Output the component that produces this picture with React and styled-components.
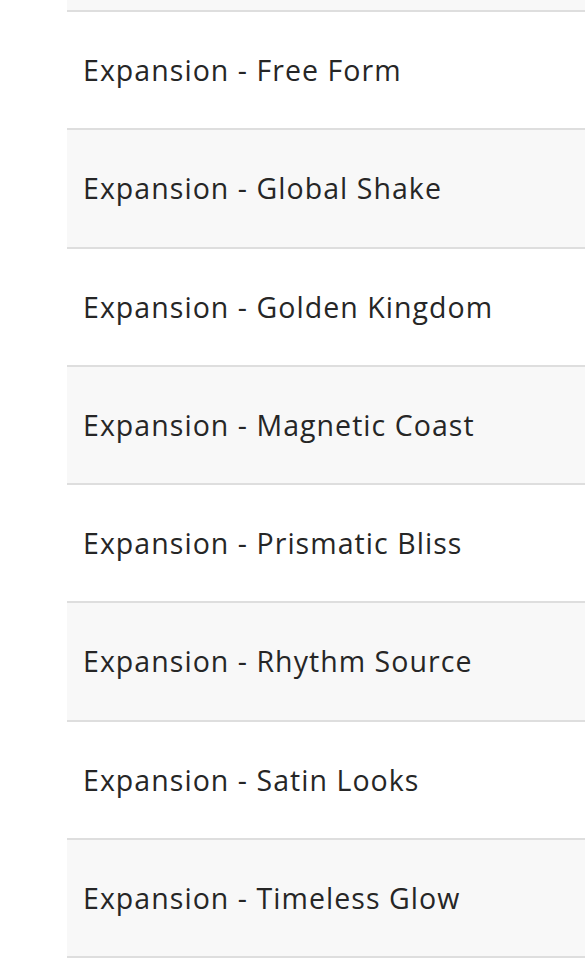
import React from 'react'
import styled, { createGlobalStyle } from 'styled-components'

const GlobalStyle = createGlobalStyle`
  html, body {
    margin: 0;
    padding: 0;
    background: #fff;
  }
`

const items = [
  'Expansion - Free Form',
  'Expansion - Global Shake',
  'Expansion - Golden Kingdom',
  'Expansion - Magnetic Coast',
  'Expansion - Prismatic Bliss',
  'Expansion - Rhythm Source',
  'Expansion - Satin Looks',
  'Expansion - Timeless Glow',
]

const List = styled.ul`
  list-style: none;
  margin: 0;
  padding: 0 0 0 67px;
  overflow: hidden;
`

const Stub = styled.li`
  height: 10px;
  background: #f8f8f8;
  border-bottom: 2px solid #dedede;
`

const Row = styled.li`
  display: flex;
  align-items: center;
  height: 116.25px;
  padding-left: 16px;
  border-bottom: 2px solid #dedede;
  background: ${p => (p.$shaded ? '#f8f8f8' : '#fff')};
  font-family: 'Open Sans', 'Noto Sans', sans-serif;
  font-size: 28.5px;
  font-weight: 400;
  letter-spacing: 1.05px;
  font-variant-ligatures: none;
  color: #262626;
  white-space: nowrap;
`

const App = () => (
  <>
    <GlobalStyle />
    <List>
      <Stub />
      {items.map((label, i) => (
        <Row key={label} $shaded={i % 2 === 1}>
          {label}
        </Row>
      ))}
    </List>
  </>
)

export default App
